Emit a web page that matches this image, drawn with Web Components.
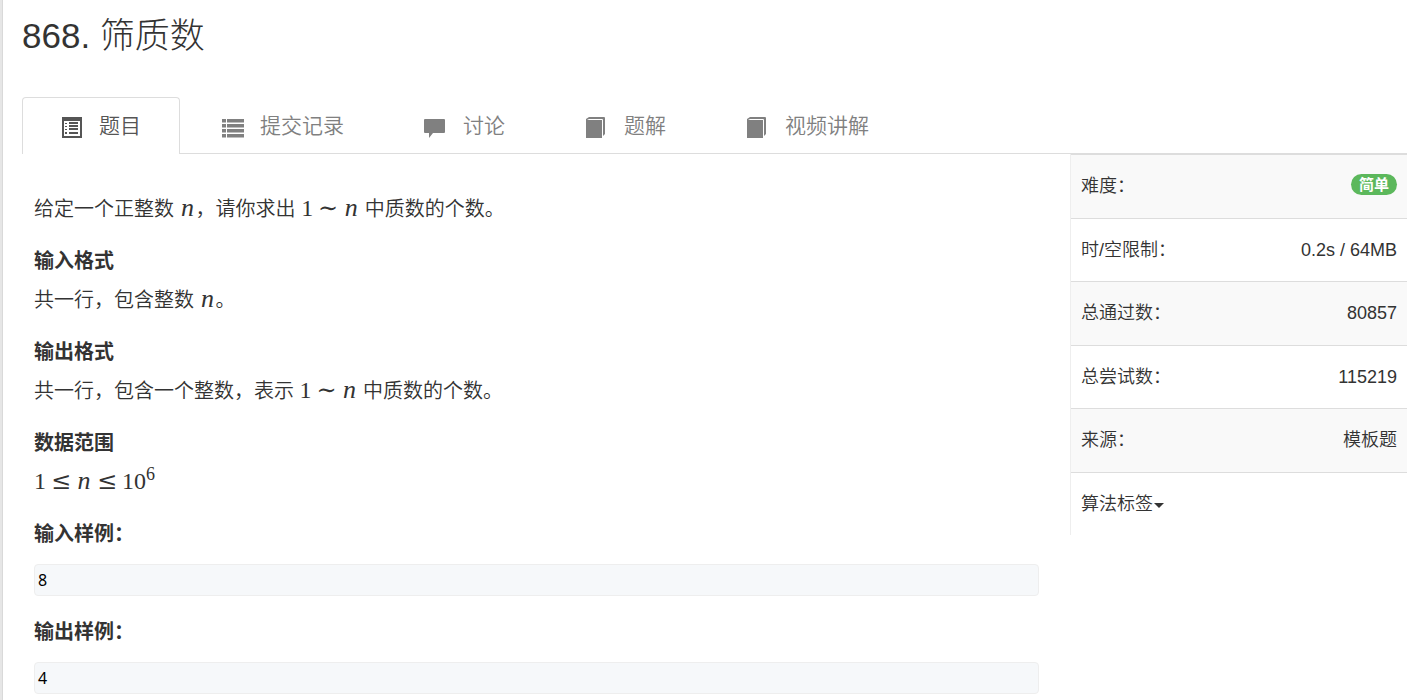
<!DOCTYPE html>
<html lang="zh-CN">
<head>
<meta charset="utf-8">
<title>868. 筛质数</title>
<style>
html { background: #e6e6e6; }
body { margin: 0; color: #333; background: #fff; font-family: "Liberation Sans", "Noto Sans CJK SC", sans-serif; }
html, body { min-height: 100vh; }
body { margin-left: 2px; border-left: 1px solid #d9d9d9; box-sizing: border-box; overflow: hidden; }
</style>
</head>
<body>
<problem-page>
  <span slot="title">868. 筛质数</span>
  <tab-bar slot="tabs">
    <tab-item icon="board" active>题目</tab-item>
    <tab-item icon="list">提交记录</tab-item>
    <tab-item icon="comment">讨论</tab-item>
    <tab-item icon="book">题解</tab-item>
    <tab-item icon="book">视频讲解</tab-item>
  </tab-bar>
  <problem-section>给定一个正整数 <math-run><i>n</i></math-run>，请你求出 <math-run>1<b>∼</b><i>n</i></math-run> 中质数的个数。</problem-section>
  <problem-section heading="输入格式">共一行，包含整数 <math-run><i>n</i></math-run>。</problem-section>
  <problem-section heading="输出格式">共一行，包含一个整数，表示 <math-run>1<b>∼</b><i>n</i></math-run> 中质数的个数。</problem-section>
  <problem-section heading="数据范围"><math-run>1<b>≤</b><i>n</i><b>≤</b>10<sup>6</sup></math-run></problem-section>
  <code-sample heading="输入样例：">8</code-sample>
  <code-sample heading="输出样例：">4</code-sample>
  <problem-info slot="side"></problem-info>
</problem-page>

<script>
const define = (name, html, setup) => {
  const template = document.createElement('template');
  template.innerHTML = html;
  customElements.define(name, class extends HTMLElement {
    constructor() {
      super();
      this.attachShadow({ mode: 'open' }).append(template.content.cloneNode(true));
    }
    connectedCallback() { if (setup) setup(this, this.shadowRoot); }
  });
};

const icons = {
  board: '<path fill-rule="evenodd" d="M1 1h20v21H1zM3 5v15h16V5z"/><path d="M4 7h2v1H4zm4-1h9v2H8zM4 10h2v1H4zm4-1h9v2H8zM4 13h2v1H4zm4-1h9v2H8zM4 16h2v2H4zm4 0h9v2H8z"/>',
  list: '<path d="M0 3h4v3.500H0zm5 0h17v3.500H5zM0 8h4v3.500H0zm5 0h17v3.500H5zM0 13h4v3.500H0zm5 0h17v3.500H5zM0 18h4v3.500H0zm5 0h17v3.500H5z"/>',
  comment: '<path d="M0 3h19q1 0 1 1v12q0 1-1 1H8l-4 5v-5H0q-1 0-1-1V4q0-1 1-1z"/>',
  book: '<path d="M0 4h16v18H0zM0 3l3-2h15q1 0 1 1v16l-2 2V4q0-1-1-1H3L1 4H0z"/>'
};

define('problem-page', `
<style>
  :host { display: block; padding: 12px 4px 6px 19px; }
  h1 { margin: 0 0 38px; font-size: 35px; line-height: 47px; font-weight: 300; }
  .columns { display: grid; grid-template-columns: minmax(0, 1fr) 337px; column-gap: 31px; align-items: start; }
  main { padding: 41px 0 0 12px; }
</style>
<h1><slot name="title"></slot></h1>
<slot name="tabs"></slot>
<div class="columns"><main><slot></slot></main><aside><slot name="side"></slot></aside></div>`);

define('tab-bar', `
<style>
  :host { display: block; border-bottom: 1px solid #ddd; }
  nav { display: flex; gap: 3px; margin-bottom: -1px; }
</style>
<nav><slot></slot></nav>`);

define('tab-item', `
<style>
  :host { display: block; color: #808080; }
  a { display: flex; align-items: center; gap: 16px; padding: 0 38px; border: 1px solid transparent; border-bottom: 0;
      border-radius: 4px 4px 0 0; color: inherit; text-decoration: none; font-size: 21px; line-height: 56px; font-weight: 350; }
  :host([active]) { color: #555; }
  :host([active]) a { border-color: #ddd; background: #fff; }
  svg { width: 22px; height: 22px; fill: currentColor; flex: none; margin-top: 2px; overflow: visible; }
</style>
<a href="#"><svg viewBox="0 0 22 22" aria-hidden="true"></svg><span><slot></slot></span></a>`,
(host, root) => { root.querySelector('svg').innerHTML = icons[host.getAttribute('icon')]; });

define('problem-section', `
<style>
  :host { display: block; margin-bottom: 27px; font-size: 20px; }
  h4 { margin: 0 0 14px; font-size: 20px; line-height: 22px; font-weight: 700; }
  h4[hidden] { display: none; }
  p { margin: 0; line-height: 28px; height: 28px; font-weight: 350; }
</style>
<h4 hidden></h4><p><slot></slot></p>`,
(host, root) => {
  const h = root.querySelector('h4');
  h.textContent = host.getAttribute('heading') || '';
  h.hidden = !h.textContent;
});

define('math-run', `
<style>
  :host { display: inline; font-family: "Liberation Serif", serif; font-size: 24px; line-height: 1; font-weight: 400; }
  ::slotted(i) { display: inline-block; width: 16px; text-align: center; font-size: 26px; }
  ::slotted(b) { display: inline-block; width: 30px; text-align: center; font-weight: 400; font-family: "DejaVu Serif", serif; font-size: 24px; }
  ::slotted(sup) { font-size: 18px; line-height: 0; }
</style><slot></slot>`);

define('code-sample', `
<style>
  :host { display: block; margin-bottom: 25px; }
  h4 { margin: 0 0 19px; font-size: 20px; line-height: 22px; font-weight: 700; }
  pre { margin: 0; padding: 0 3px; border: 1px solid #eee; border-radius: 4px; background: #f6f8fa; color: #000;
        font: 16px/30px "Noto Sans", sans-serif; }
</style>
<h4></h4><pre><slot></slot></pre>`,
(host, root) => { root.querySelector('h4').textContent = host.getAttribute('heading'); });

define('problem-info', `
<style>
  :host { display: block; border-left: 1px solid #eee; }
  table { width: 100%; border-collapse: separate; border-spacing: 0; font-size: 18px; line-height: 24px; font-weight: 350; }
  th, td { padding: 19px 10px; border-top: 1px solid #ddd; }
  th { text-align: left; font-weight: inherit; }
  td { text-align: right; }
  tr:nth-child(odd) > * { padding-bottom: 20px; background: #f9f9f9; }
  .badge { display: inline-block; vertical-align: top; padding: 0 8px; border-radius: 11px; background: #5cb85c; color: #fff; font-size: 15px; line-height: 21px; font-weight: 700; }
  button { display: flex; align-items: center; gap: 1px; padding: 0; border: 0; background: none; color: inherit; font: inherit; }
  .caret { border: 5px solid transparent; border-top-color: #333; border-bottom: 0; margin-top: 3px; }
</style>
<table>
  <tr><th scope="row">难度：</th><td><span class="badge">简单</span></td></tr>
  <tr><th scope="row">时/空限制：</th><td>0.2s / 64MB</td></tr>
  <tr><th scope="row">总通过数：</th><td>80857</td></tr>
  <tr><th scope="row">总尝试数：</th><td>115219</td></tr>
  <tr><th scope="row">来源：</th><td>模板题</td></tr>
  <tr><th scope="row" colspan="2"><button type="button">算法标签<span class="caret"></span></button></th></tr>
</table>`);
</script>
</body>
</html>
